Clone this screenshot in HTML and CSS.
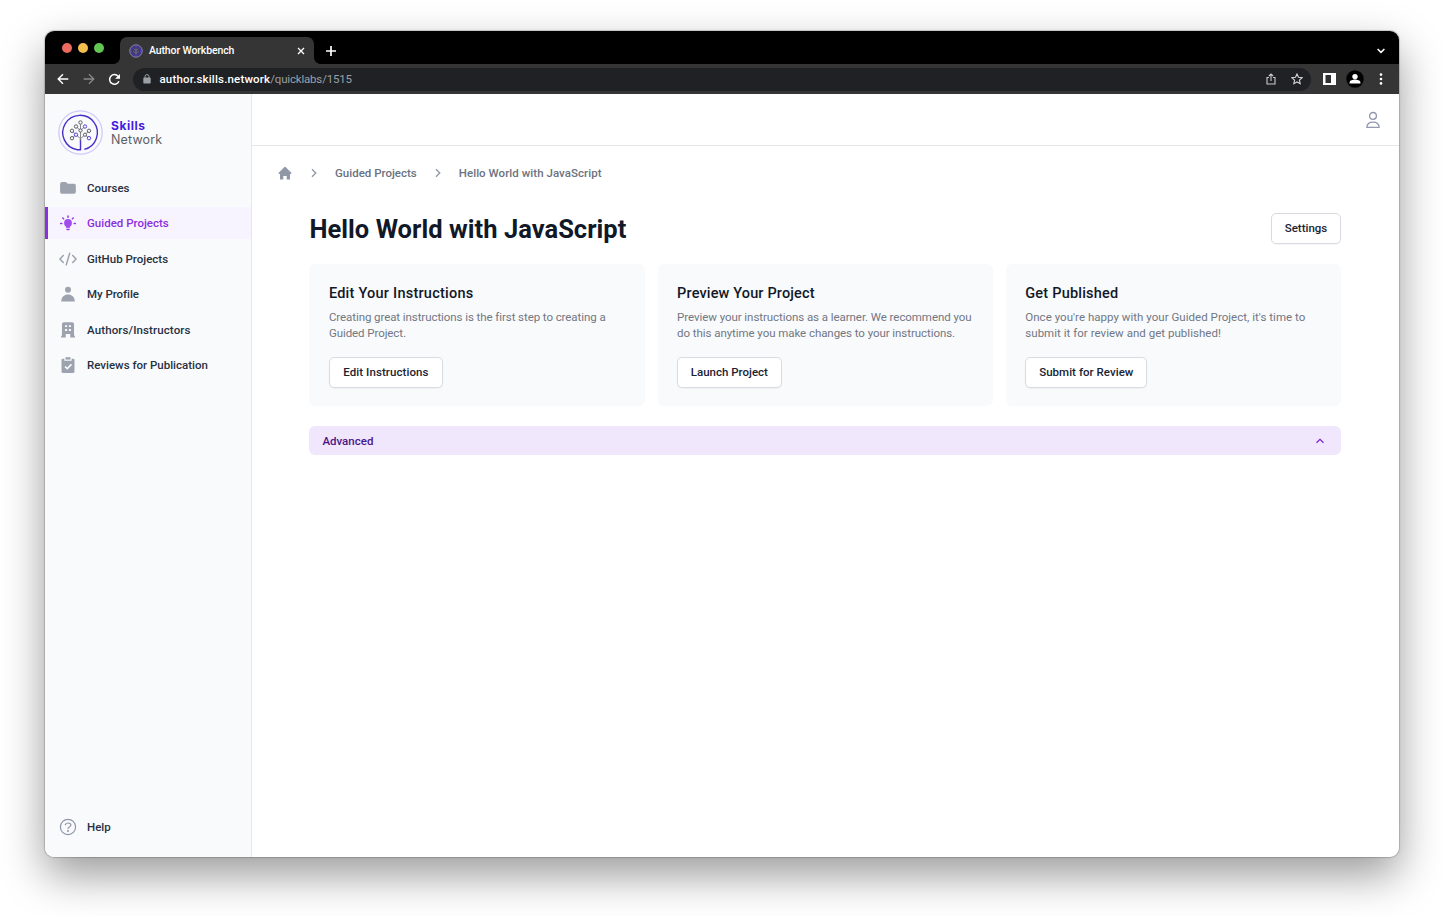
FILE: index.html
```html
<!DOCTYPE html>
<html lang="en">
<head>
<meta charset="utf-8">
<title>Author Workbench</title>
<link rel="stylesheet" href="styles.css">
</head>
<body>
<div class="window">
  <div class="tabstrip">
    <div class="lights"><i class="light red"></i><i class="light yellow"></i><i class="light green"></i></div>
    <div class="tab">
      <svg class="favicon" width="14" height="14" viewBox="0 0 14 14" fill="none"><circle cx="7" cy="7" r="6.200" fill="#3c3763" stroke="#8f88b8"/><circle cx="7" cy="7" r="4.600" stroke="#4a38b8"/><path d="M7 11V3.500M4 7.500l3 1.500 3-1.500M4.500 5l2.500 1.500L9.500 5" stroke="#77719a" stroke-width=".8"/></svg>
      <span class="tab-title">Author Workbench</span>
      <svg class="tab-close" width="8" height="8" viewBox="0 0 8 8"><path d="M1 1l6 6M7 1L1 7" stroke="#fff" stroke-width="1.300"/></svg>
    </div>
    <svg class="new-tab" width="10" height="10" viewBox="0 0 10 10"><path d="M5 0v10M0 5h10" stroke="#fff" stroke-width="1.700"/></svg>
    <svg class="tab-menu" width="8" height="6" viewBox="0 0 8 6" fill="none"><path d="M.6 1L4 4.400 7.400 1" stroke="#fff" stroke-width="1.500"/></svg>
  </div>
  <div class="toolbar">
    <svg width="12" height="12" viewBox="0 0 12 12" fill="none" stroke="#fff" stroke-width="1.400"><path d="M11.300 6H1.500M6 1.200L1.200 6 6 10.800"/></svg>
    <svg class="forward" width="12" height="12" viewBox="0 0 12 12" fill="none" stroke="#88898b" stroke-width="1.300"><path d="M.7 6h9.800M6 1.200L10.800 6 6 10.800"/></svg>
    <svg class="reload" width="13" height="13" viewBox="0 0 13 13" fill="none"><path d="M10.900 8.200A4.800 4.800 0 1 1 10.200 3.400" stroke="#fff" stroke-width="1.500"/><path d="M12 .9v4.900H7.100z" fill="#fff"/></svg>
    <div class="address">
      <svg width="8" height="10" viewBox="0 0 8 10"><rect x=".3" y="3.600" width="7.400" height="6" rx=".8" fill="#9aa0a6"/><path d="M2 4V2.600a2 2 0 0 1 4 0V4" fill="none" stroke="#9aa0a6"/></svg>
      <span class="url"><b>author.skills.network</b>/quicklabs/1515</span>
      <svg class="share" width="10" height="12" viewBox="0 0 10 12" fill="none" stroke="#c8cacd" stroke-width="1.100"><path d="M3 4.500H1v6.500h8V4.500H7M5 8V1.200M2.900 3L5 1l2.100 2"/></svg>
      <svg class="star" width="12" height="12" viewBox="0 0 12 12" fill="none" stroke="#d2d4d6" stroke-width="1.100"><path d="M6 1l1.500 3.300 3.600.4-2.700 2.400.8 3.600L6 8.900l-3.200 1.800.8-3.600L.9 4.700l3.600-.4z"/></svg>
    </div>
    <svg class="panel" width="13" height="12" viewBox="0 0 13 12"><path d="M0 0h13v12H0z" fill="#fff"/><path d="M2.500 2h5.500v8H2.500z" fill="#303134"/></svg>
    <svg class="avatar" width="18" height="18" viewBox="0 0 18 18"><circle cx="9" cy="9" r="8.700" fill="#000"/><circle cx="9" cy="6.600" r="2.700" fill="#fff"/><path d="M3.600 13.500v-1c0-2 3.400-2.900 5.400-2.900s5.400.9 5.400 2.900v1z" fill="#fff"/></svg>
    <svg class="more" width="4" height="12" viewBox="0 0 4 12" fill="#fff"><circle cx="2" cy="1.600" r="1.300"/><circle cx="2" cy="6" r="1.300"/><circle cx="2" cy="10.400" r="1.300"/></svg>
  </div>
  <div class="page">
    <aside class="sidebar">
      <div class="brand">
        <svg width="45" height="45" viewBox="0 0 45 45" fill="none">
          <circle cx="22.500" cy="22.500" r="21.700" stroke="#d3c8fb" stroke-width="1.300"/>
          <path d="M22.500 29v10.700h-3.200A17.300 17.300 0 1 1 26.300 39.400" stroke="#4a2fc9" stroke-width="1.400"/>
          <path d="M22.500 12.500v18M18 16.500l4.500 4 4.500-4M14 20.800l4 3.900 4.500 4 4.500-4 4-3.900M14 28.200l4-3.500M31 28.200l-4-3.500" stroke="#77777f" stroke-width=".9"/>
          <g fill="#fafafd" stroke="#5d5d66" stroke-width="1"><circle cx="22.500" cy="12.500" r="1.700"/><circle cx="18" cy="16.500" r="1.700"/><circle cx="22.500" cy="20.500" r="1.600"/><circle cx="14" cy="20.800" r="1.700"/><circle cx="31" cy="20.800" r="1.700"/><circle cx="14" cy="28.200" r="1.700"/><circle cx="27" cy="24.700" r="1.600"/></g>
          <g fill="#fafafd" stroke="#5a3ee0" stroke-width="1"><circle cx="27" cy="16.500" r="1.700"/><circle cx="18" cy="24.700" r="1.700"/><circle cx="31" cy="28.200" r="1.700"/></g>
        </svg>
        <div class="brand-name"><b>Skills</b><span>Network</span></div>
      </div>
      <nav class="nav">
        <a class="item"><svg width="18" height="18" viewBox="0 0 20 20" fill="#9ca3af"><path d="M1.200 5.700a2.200 2.200 0 0 1 2-2.500h4.500l2 2.200h7A2 2 0 0 1 18.700 7.500v7a2 2 0 0 1-2 2H3.200a2 2 0 0 1-2-2z"/></svg><span>Courses</span></a>
        <a class="item active"><svg width="18" height="18" viewBox="0 0 18 18"><circle cx="9" cy="9" r="3.900" fill="#a04df0"/><path d="M7 12.500h4v1.200H7zM7.300 14.700h3.400v.5a1 1 0 0 1-1 1H8.300a1 1 0 0 1-1-1z" fill="#9333ea"/><path d="M9 1.900v1.300M3.800 4l.8.8M14.200 4l-.8.8M1.700 9.500h1.100M15.200 9.500h1.100" stroke="#9333ea" stroke-width="1.500" stroke-linecap="round"/></svg><span>Guided Projects</span></a>
        <a class="item"><svg width="18" height="18" viewBox="0 0 18 18" fill="none" stroke="#9ca3af" stroke-width="1.500" stroke-linecap="round" stroke-linejoin="round"><path d="M4.300 5.500L.9 9l3.400 3.500M13.700 5.500L17.100 9l-3.400 3.500M10.700 3.200L7.300 14.800"/></svg><span>GitHub Projects</span></a>
        <a class="item"><svg width="18" height="18" viewBox="0 0 18 18" fill="#9ca3af"><circle cx="9" cy="4.800" r="3"/><path d="M2.200 16.500c0-4.500 3.300-7 6.800-7s6.800 2.500 6.800 7z"/></svg><span class="t-profile">My Profile</span></a>
        <a class="item"><svg width="18" height="18" viewBox="0 0 20 20" fill="#9ca3af"><path fill-rule="evenodd" d="M3.300 3.500a2 2 0 0 1 2-2h9.400a2 2 0 0 1 2 2v13h1v1.700h-5.200v-3.800h-5v3.800H2.300v-1.700h1zM6.700 4.700v2h2.300v-2zm4.300 0v2h2.300v-2zM6.700 9v2h2.300V9zm4.300 0v2h2.300V9z"/></svg><span class="t-authors">Authors/Instructors</span></a>
        <a class="item"><svg width="18" height="18" viewBox="0 0 18 18"><path d="M2.500 4a1.300 1.300 0 0 1 1.300-1.300h1.500V4.800h7.400V2.700h1.500A1.300 1.300 0 0 1 15.500 4v11.400a1.600 1.600 0 0 1-1.600 1.600H4.100A1.600 1.600 0 0 1 2.500 15.400z" fill="#9ca3af"/><path d="M6.500 1.200h5v2.400h-5z" fill="#9ca3af"/><path d="M6 10.500l2.200 2.200 4.200-4.300" fill="none" stroke="#fff" stroke-width="1.600"/></svg><span>Reviews for Publication</span></a>
      </nav>
      <a class="item help"><svg width="18" height="18" viewBox="0 0 18 18" fill="none" stroke="#8e96a8" stroke-width="1.200" stroke-linecap="round"><circle cx="9" cy="9" r="7.600"/><path d="M6.300 6.600C7 5.300 8.200 5 9.200 5c1.500 0 2.700.8 2.700 2.100 0 1.900-2.900 1.800-2.900 3.400"/><circle cx="9" cy="12.900" r=".4" fill="#8e96a8"/></svg><span>Help</span></a>
    </aside>
    <main class="main">
      <header class="topbar"><svg width="16" height="18" viewBox="0 0 16 18" fill="none" stroke="#9299ad" stroke-width="1.300" stroke-linejoin="round"><circle cx="8" cy="4.900" r="3.400"/><path d="M1.800 16.400c.2-3.300 2.700-5.300 6.200-5.300s6 2 6.200 5.300z"/></svg></header>
      <div class="crumbs">
        <svg width="14" height="14" viewBox="0 0 14 14" fill="#9097a6"><path d="M7 .5L13.600 7l-.7.9h-.9V13.500H8.700V10H5.300v3.500H2V7.900h-.9L.4 7z"/></svg>
        <svg class="chev" width="6" height="10" viewBox="0 0 6 10" fill="none" stroke="#8f96a5" stroke-width="1.300"><path d="M1 1.200L4.800 5 1 8.800"/></svg>
        <span>Guided Projects</span>
        <svg class="chev second" width="6" height="10" viewBox="0 0 6 10" fill="none" stroke="#8f96a5" stroke-width="1.300"><path d="M1 1.200L4.800 5 1 8.800"/></svg>
        <span class="t-hello">Hello World with JavaScript</span>
      </div>
      <section class="content">
        <div class="heading"><h1>Hello World with JavaScript</h1><button class="btn w-settings">Settings</button></div>
        <div class="cards">
          <div class="card"><h2 class="h-edit">Edit Your Instructions</h2><p class="p-edit">Creating great instructions is the first step to creating a<br>Guided Project.</p><button class="btn w-edit">Edit Instructions</button></div>
          <div class="card"><h2 class="h-preview">Preview Your Project</h2><p class="p-preview">Preview your instructions as a learner. We recommend you<br>do this anytime you make changes to your instructions.</p><button class="btn w-launch">Launch Project</button></div>
          <div class="card"><h2 class="h-get">Get Published</h2><p class="p-get">Once you're happy with your Guided Project, it's time to<br>submit it for review and get published!</p><button class="btn w-submit">Submit for Review</button></div>
        </div>
        <div class="advanced"><span>Advanced</span><svg width="10" height="6" viewBox="0 0 10 6" fill="none"><path d="M1.500 4.700L5 1.300l3.500 3.400" stroke="#7e22ce" stroke-width="1.300"/></svg></div>
      </section>
    </main>
  </div>
</div>
</body>
</html>
```
FILE: styles.css
```css
* { box-sizing: border-box; }
body {
  margin: 0;
  height: 916px;
  padding: 31px 45px 59px;
  background: #fff;
  overflow: hidden;
  font-family: Roboto, "Noto Sans", sans-serif;
  font-size: 11.500px;
}
svg { display: block; flex: none; }
.window {
  height: 826px;
  display: flex;
  flex-direction: column;
  border-radius: 9px;
  overflow: hidden;
  background: #fff;
  box-shadow: 0 0 1px 1px rgba(0,0,0,.18), 0 18px 44px rgba(0,0,0,.4);
}
.tabstrip { height: 33px; flex: none; display: flex; align-items: center; background: #000; padding: 0 14px 0 17px; }
.lights { display: flex; gap: 6px; width: 58px; margin-top: 1px; }
.light { width: 10px; height: 10px; border-radius: 50%; }
.red { background: #ed6a5e; }
.yellow { background: #f5bf4f; }
.green { background: #62c554; }
.tab {
  position: relative;
  align-self: flex-end;
  width: 194px; height: 27px;
  display: flex; align-items: center;
  padding: 0 9px;
  background: #353535;
  border-radius: 7px 7px 0 0;
  color: #fff;
}
.tab::before, .tab::after { content: ""; position: absolute; bottom: 0; width: 6px; height: 6px; }
.tab::before { left: -6px; background: radial-gradient(circle at 0 0, #000 5.500px, #353535 6px); }
.tab::after { right: -6px; background: radial-gradient(circle at 100% 0, #000 5.500px, #353535 6px); }
.tab-title { margin-left: 6px; font: 500 10.500px Roboto, sans-serif; letter-spacing: -.13px; }
.tab-close { margin-left: auto; }
.new-tab { margin: 6px 0 0 12px; }
.tab-menu { margin: 6px 0 0 auto; }
.toolbar { height: 30px; flex: none; display: flex; align-items: center; background: #353535; padding: 0 16px 0 12px; }
.forward { margin-left: 14px; }
.reload { margin-left: 13px; }
.address {
  flex: 1;
  height: 23px;
  display: flex; align-items: center;
  margin-left: 12px;
  padding: 0 8px 0 9.500px;
  border-radius: 12px;
  background: #202124;
  color: #9aa0a6;
}
.url { margin-left: 9px; font: 400 11.500px Roboto, sans-serif; letter-spacing: -.18px; }
.url b { font-weight: 500; color: #fff; letter-spacing: .17px; }
.share { margin-left: auto; }
.star { margin-left: 15px; }
.panel { margin-left: 12px; }
.avatar { margin-left: 10px; }
.more { margin-left: 15px; }
.page { flex: 1; display: flex; min-height: 0; }
.sidebar { width: 207px; flex: none; display: flex; flex-direction: column; background: #f9fafc; border-right: 1px solid #e5e7eb; padding: 16px 0 14px; }
.brand { display: flex; align-items: center; gap: 8px; padding-left: 13px; }
.brand-name { display: flex; flex-direction: column; gap: 1px; font: 400 12.500px/13px Inter, sans-serif; letter-spacing: .15px; color: #5b5f66; }
.brand-name b { font-size: 12px; line-height: 12px; letter-spacing: .55px; color: #431de0; font-weight: 700; }
.nav { display: flex; flex-direction: column; gap: 3.400px; margin-top: 17px; }
.item { height: 32px; display: flex; align-items: center; gap: 10.500px; padding-left: 13.500px; font-weight: 500; color: #273142; white-space: nowrap; }
.active { background: #f8f4ff; color: #8b2fe0; box-shadow: inset 3px 0 #8633dc; }
.help { margin-top: auto; }
.main { flex: 1; min-width: 0; }
.topbar { height: 52px; display: flex; align-items: center; justify-content: flex-end; padding-right: 18px; border-bottom: 1px solid #e5e7eb; }
.crumbs { display: flex; align-items: center; height: 16px; margin-top: 19px; padding-left: 26px; color: #6b7280; font-weight: 500; }
.chev { margin: 0 18px 0 19px; }
.second { margin: 0 18px; }
.content { padding: 32px 58px 0 57.400px; }
.heading { display: flex; justify-content: space-between; align-items: center; height: 31px; }
h1 { margin: 2px 0 0; font-size: 25.500px; line-height: 31px; letter-spacing: .04px; font-weight: 700; color: #111827; white-space: nowrap; }
.btn {
  height: 31px;
  padding: 0 0 1px;
  border: 1px solid #d8dbe1;
  border-radius: 5px;
  background: #fff;
  box-shadow: 0 1px 1px rgba(0,0,0,.04);
  font: 500 11.500px/28px Roboto, "Noto Sans", sans-serif;
  color: #1b2333;
  white-space: nowrap;
}
.cards { display: grid; grid-template-columns: repeat(3, 1fr); gap: 13px; margin-top: 20px; }
.card { height: 142px; padding: 19px 0 0 19.500px; border-radius: 6px; background: #f9fafb; }
h2 { margin: 0; font-size: 14.500px; line-height: 21px; font-weight: 500; color: #111827; white-space: nowrap; }
p { margin: 5px 0 16px; font-size: 11.500px; line-height: 16px; color: #717784; white-space: nowrap; }
.advanced { height: 29px; margin-top: 20px; display: flex; align-items: center; justify-content: space-between; padding: 0 16px 0 13px; border-radius: 6px; background: #f0e7fc; color: #4c1488; font-weight: 500; }
.w-settings { width: 70px; }
.w-edit { width: 114px; letter-spacing: .08px; }
.w-launch { width: 104.500px; }
.w-submit { width: 122px; letter-spacing: .04px; }
.t-authors { letter-spacing: .12px; }
.t-profile { letter-spacing: -.05px; }
.t-hello { letter-spacing: .05px; }
.h-edit { letter-spacing: .24px; }
.h-preview { letter-spacing: .15px; }
.h-get { letter-spacing: .2px; }
.p-edit { letter-spacing: -.075px; }
.p-preview { letter-spacing: -.06px; }
.p-get { letter-spacing: .03px; }
```
